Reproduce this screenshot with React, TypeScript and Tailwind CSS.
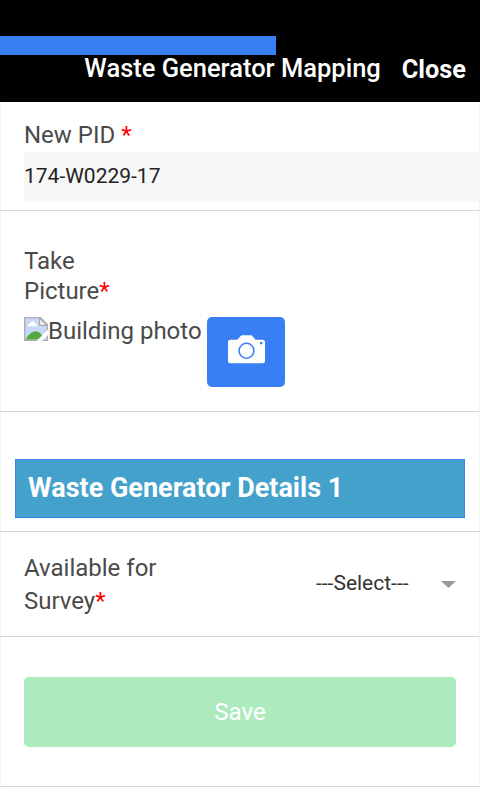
import React from 'react';

const CameraIcon: React.FC<{ className?: string }> = ({ className }) => (
    <svg className={className} viewBox="0 0 37 29" fill="currentColor">
        <path
            fillRule="evenodd"
            d="M2.5 4.8H8.5C9.8 4.8 10.7 3.3 12 1.8C13 .6 13.8 .2 15 .2H22C23.2 .2 24 .6 25 1.8C26.3 3.3 27.2 4.8 28.5 4.8H34.5A2.5 2.5 0 0 1 37 7.3V25.8A2.5 2.5 0 0 1 34.5 28.3H2.5A2.5 2.5 0 0 1 0 25.8V7.3A2.5 2.5 0 0 1 2.5 4.8ZM18.5 7.5A8.2 8.2 0 1 0 18.5 23.9A8.2 8.2 0 1 0 18.5 7.5ZM33.2 6.8A1.3 1.3 0 1 0 33.2 9.4A1.3 1.3 0 1 0 33.2 6.8Z"
        />
        <circle cx="18.5" cy="15.7" r="6.7" />
    </svg>
);

const BrokenImageIcon: React.FC<{ className?: string }> = ({ className }) => (
    <svg className={className} viewBox="0 0 24 24">
        <path d="M.7 .7H16.5L23.3 7.5V23.3H.7Z" fill="#c6d8fa" stroke="#acacac" strokeWidth="1.3" />
        <path d="M3.8 9.3C3.3 7.3 5 6.2 6.3 6.6C6.8 3.6 10.4 3.6 11 6.5C12.6 6.4 13.4 7.8 12.8 9.3Z" fill="#fff" />
        <path d="M2 22.6C4 17.5 8 14.3 12 14.3C15.5 14.3 18.5 18 20 22.6Z" fill="#55a840" />
        <path d="M15.6 1V8.4H23Z" fill="#f4f4f4" stroke="#acacac" strokeWidth="1.2" />
        <path d="M24 12.5L12.5 24H18L24 18Z" fill="#fff" />
    </svg>
);

const Required: React.FC = () => <span className="text-[#ff0000]">*</span>;

const Row: React.FC<{ className: string; children: React.ReactNode }> = ({ className, children }) => (
    <div className={`border-b border-[#d6d6d6] pl-6 ${className}`}>{children}</div>
);

export default function App() {
    return (
        <div className="h-[800px] w-[480px] overflow-hidden bg-white font-['Roboto',sans-serif] text-[24px] text-[#4a4a4a]">
            <header className="h-[102px] bg-black pt-9 text-white">
                <div className="h-[19px] w-[276px] bg-[#387ef5]" />
                <div className="flex items-start justify-end pr-3.5">
                    <h1 className="text-[25.5px] leading-[27px] font-medium whitespace-nowrap">Waste Generator Mapping</h1>
                    <button className="ml-[21px] pt-px text-[25.3px] leading-[27px] font-bold">Close</button>
                </div>
            </header>

            <main className="border-x border-[#f4f4f4]">
                <Row className="-ml-px h-[109px] pt-[18px]">
                    <label className="block leading-[30px]">New PID <Required /></label>
                    <div className="mt-0.5 h-[50px] bg-[#f7f7f7] text-[21px] leading-[48px] text-[#222]">174-W0229-17</div>
                </Row>

                <Row className="-ml-px h-[201px] pt-[35px]">
                    <p className="w-[100px] leading-[30px]">Take Picture<Required /></p>
                    <div className="mt-[11px] flex items-start">
                        <BrokenImageIcon className="h-6 w-6" />
                        <span className="w-[159px] leading-7 whitespace-nowrap">Building photo</span>
                        <button className="flex h-[70px] w-[78px] justify-center rounded-[5px] bg-[#387ef5] pt-[18px] text-white">
                            <CameraIcon className="h-[29px] w-[37px]" />
                        </button>
                    </div>
                </Row>

                <div className="-mx-px h-[120px] border-b border-[#d6d6d6] px-[15px] pt-[47px]">
                    <h2 className="h-[59px] border border-[#4080e8] bg-[#43a1cb] pl-3 text-[27px] leading-[57px] font-bold text-white">
                        Waste Generator Details 1
                    </h2>
                </div>

                <Row className="-ml-px flex h-[105px] justify-between pt-[19px] pr-[23px]">
                    <p className="w-[150px] pt-px leading-[33px]">Available for Survey<Required /></p>
                    <div className="flex h-[66px] items-center text-[21px] text-[#333]">
                        <span className="w-[125px] pb-px">---Select---</span>
                        <svg className="h-[7px] w-[15px] fill-[#999]" viewBox="0 0 15 7"><path d="M0 0H15L7.5 7Z" /></svg>
                    </div>
                </Row>

                <Row className="-ml-px h-[150px] pt-10 pr-[23px]">
                    <button className="h-[70px] w-full rounded-[5px] bg-[#adebbf] text-[24px] text-white">Save</button>
                </Row>
            </main>
        </div>
    );
}
